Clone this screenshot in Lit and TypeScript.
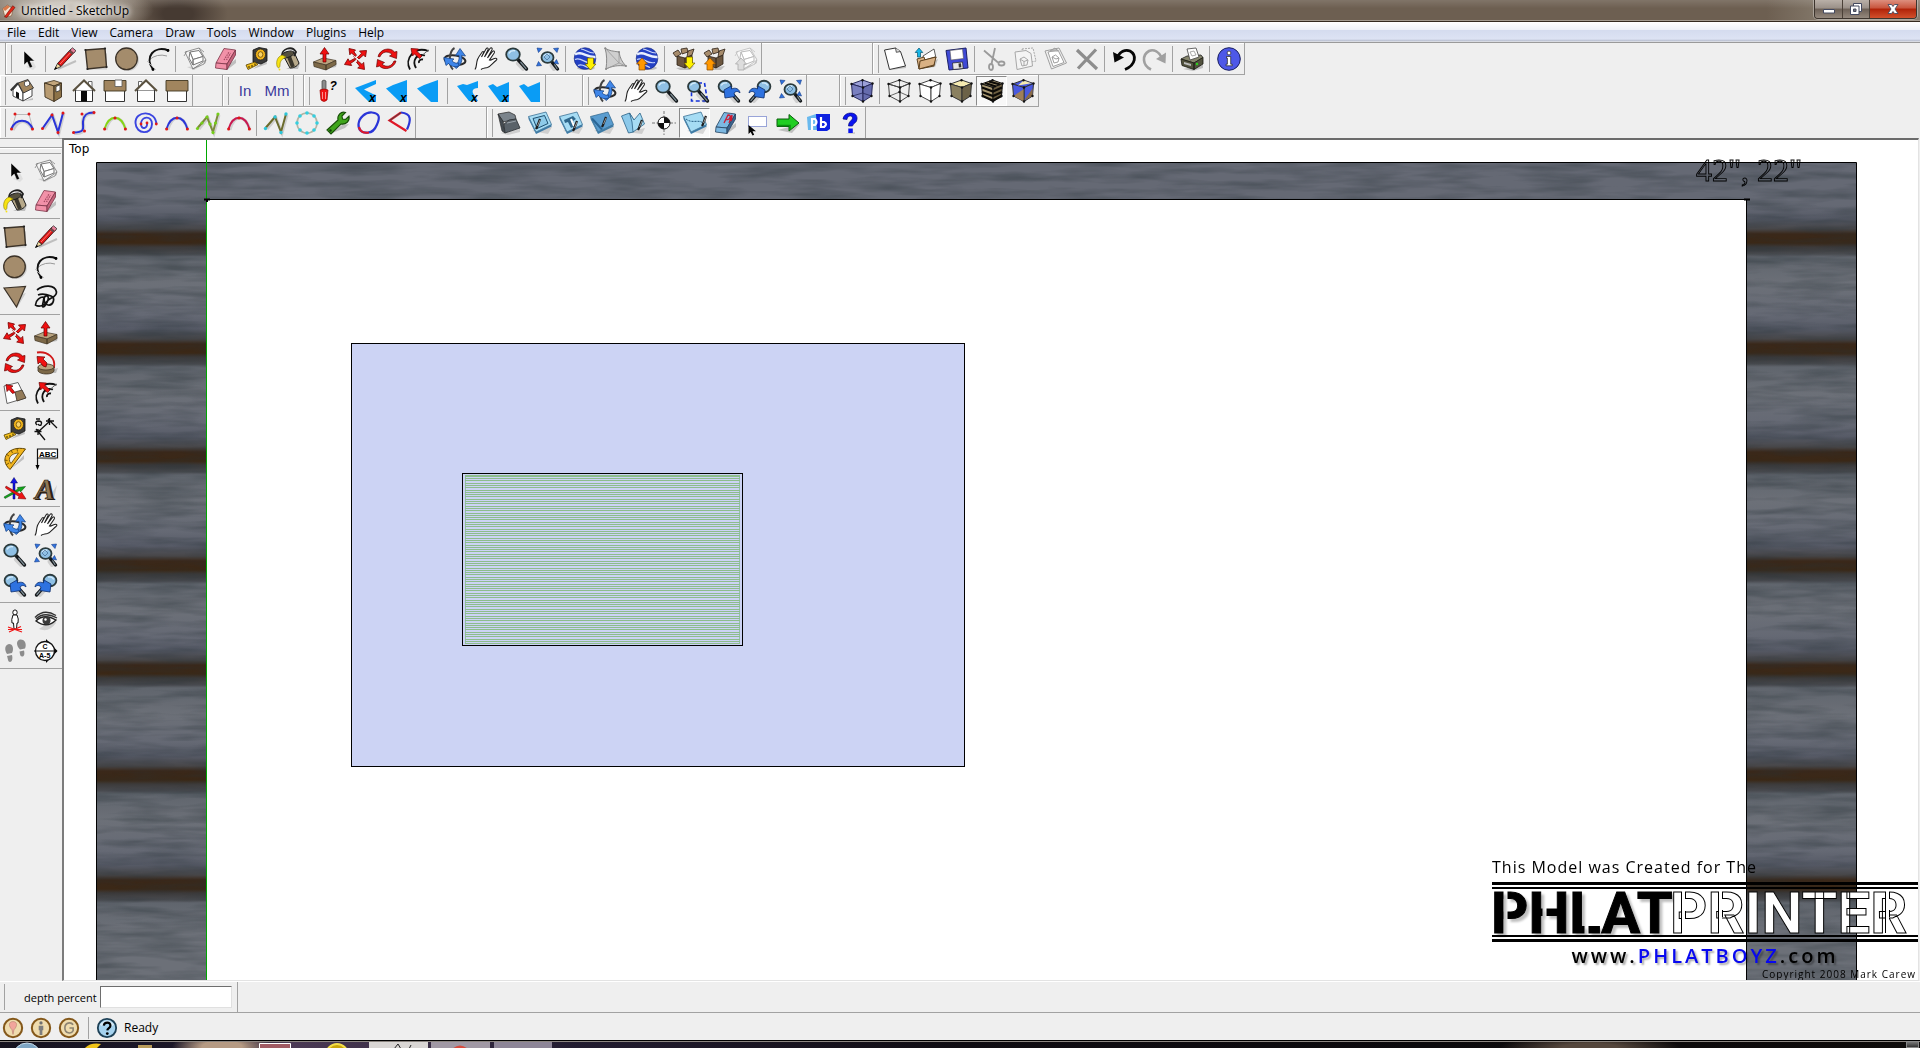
import { LitElement, html, css, svg, nothing } from "lit";
import type { SVGTemplateResult } from "lit";
import { customElement, property } from "lit/decorators.js";
import { classMap } from "lit/directives/class-map.js";
import { styleMap } from "lit/directives/style-map.js";

type Art = SVGTemplateResult;

/* ---------- shared icon parts ---------- */

const arrowDown = (x: number, y: number, fill: string): Art =>
  svg`<path d="M${x - 3} ${y}h6v6h2.500l-5.500 6-5.500-6h2.500z" fill=${fill} stroke="#6b5a00" stroke-width=".7"/>`;
const arrowUp = (x: number, y: number, fill: string): Art =>
  svg`<path d="M${x - 3} ${y + 12}h6v-6h2.500l-5.500-6-5.500 6h2.500z" fill=${fill} stroke="#8a4a00" stroke-width=".7"/>`;
const dots = (pts: number[][], fill: string, r = 1.3): Art[] =>
  pts.map(([x, y]) => svg`<circle cx=${x} cy=${y} r=${r} fill=${fill}/>`);
const lens = (cx: number, cy: number, r: number): Art => svg`
  <path d="M${cx + r - 2} ${cy + r + 2}l${20 - cx - r} ${20 - cy - r}" stroke="#0002" stroke-width="4" stroke-linecap="round"/>
  <path d="M${cx + r * 0.7} ${cy + r * 0.7}L21.500 22" stroke="#15191c" stroke-width="3.400" stroke-linecap="round"/>
  <path d="M${cx + r * 0.7 + 3} ${cy + r * 0.7 + 3}L21 21.500" stroke="#7d8c94" stroke-width="1.200" stroke-linecap="round"/>
  <ellipse cx=${cx} cy=${cy} rx=${r} ry=${r * 0.9} fill="#8fc0e4" stroke="#2b3a3c" stroke-width="1.800"/>
  <path d="M${cx - r * 0.6} ${cy - 1}q${r * 0.3} ${-r * 0.5} ${r * 0.9} ${-r * 0.4}" stroke="#d5ecfb" stroke-width="1.400" fill="none"/>`;
const cube = (top: string, left: string, right: string, line = "#222", extra: Art | typeof nothing = nothing): Art => svg`
  <path d="M1.500 5L12.500 1 22.500 4.500 13 8.500z" fill=${top} stroke=${line}/>
  <path d="M1.500 5L13 8.500V22.500L2.500 17z" fill=${left} stroke=${line}/>
  <path d="M22.500 4.500L13 8.500V22.500L21.500 17z" fill=${right} stroke=${line}/>
  ${extra}
  ${dots([[1.5, 5], [12.5, 1.2], [22.5, 4.5], [13, 8.5], [13, 22.5], [2.5, 17], [21.5, 17]], "#111", 1.2)}`;
const arc = (color: string, knob: string): Art => svg`
  <path d="M3 19C7 3 18 3 23 19" fill="none" stroke="#0002" stroke-width="3"/>
  <path d="M1.500 18C6 3 18 3 22.500 18" fill="none" stroke=${color} stroke-width="2"/>
  ${dots([[1.6, 18], [12, 7], [22.4, 18]], knob, 1.5)}`;
const globe: Art = svg`
  <ellipse cx="13" cy="21" rx="9" ry="2" fill="#0003"/>
  <circle cx="12" cy="11.500" r="10.800" fill="#2441c4" stroke="#152778" stroke-width=".6"/>
  <path d="M2 7.500C8 3 14 11 22.500 10" fill="none" stroke="#e8efff" stroke-width="2.400"/>
  <path d="M2 12.500c7-3 9 5 18 3M8 2c4 0 7 4 13 4M5 18.500c4-2 7 1 10 2" fill="none" stroke="#c9d6fb" stroke-width="1.200"/>`;
const carton: Art = svg`
  <path d="M4 21l18-2-4 4H8z" fill="#0003"/>
  <path d="M5 9l8 2 7-3v9l-7 4-8-3z" fill="#6b563f" stroke="#2c2117" stroke-width=".8"/>
  <path d="M1 6l5-3 3 4-5 3zM9 2l6-1 1 4-6 2zM16 4l6-2-2 6-5 2z" fill="#a78c6c" stroke="#2c2117" stroke-width=".8"/>
  <path d="M13 11v10" stroke="#2c2117"/>`;
const frame = (fill: string, line: string): Art => svg`
  <path d="M4 20l16-2 3-8v6l-12 7z" fill="#0002"/>
  <path d="M2 5L16 1l7 12-13 9z" fill=${fill} stroke=${line} stroke-width=".8"/>
  <path d="M7 5l9-1.500 4 6-10 3z" fill="#fff" stroke=${line}/>
  <path d="M7 5l3 7.500V18l-4-7zM10 12.500l10-3v4.500l-10 4z" fill="#fff" stroke=${line}/>
  <path d="M1 9l3-5M9 22l12-5 2-4M16 1l5 4" fill="none" stroke=${line} stroke-width=".7"/>`;
const rubber = (body: string, dark: string, line: string): Art => svg`
  <path d="M9 22l13-10v4l-9 7z" fill="#0003"/>
  <path d="M10 1.500l11.500 1.500-8.500 14L2 16z" fill=${body} stroke=${line} stroke-width=".8"/>
  <path d="M2 16l11 1v5.500L1.500 21z" fill=${body} stroke=${line} stroke-width=".8"/>
  <path d="M13 17l8.500-14v5L13 22.500z" fill=${dark} stroke=${line} stroke-width=".8"/>`;
const wedge = (d: string, x: boolean): Art => svg`
  <path d=${d} fill="#0a9cf5"/>
  ${x ? svg`<text x="15" y="23" font-family="Liberation Sans" font-size="12" font-weight="700" font-style="italic">x</text>` : nothing}`;
const slab = (fill: string, inner: Art | typeof nothing): Art => svg`
  <path d="M4 20l16 3 4-7-4-4z" fill="#0002"/>
  <path d="M.5 5.500L18 1l5.500 12.500L8 21z" fill=${fill} stroke="#2a6288" stroke-width=".7"/>
  <path d="M8 21l15.500-7.500v2L8 23zM.5 5.500L8 21v2L.5 8z" fill="#3d7ba6"/>
  ${inner}`;
const bit = (x: number, y: number): Art =>
  svg`<path d="M${x + 3} ${y - 6}l-3 8-1 2" stroke="#1c1c1c" stroke-width="2.200" fill="none"/><path d="M${x + 3} ${y - 5}l-2.500 6" stroke="#ccc" stroke-width=".7"/>`;

const ICONS: Record<string, Art> = {
  select: svg`<path d="M10 20l7-6 3 6-3 3z" fill="#0001"/><path d="M8 4v14l3.200-3 2.600 6 2.800-1.200-2.600-5.800h4.500z" fill="#050505" stroke="#fff" stroke-width=".5"/>`,
  pencil: svg`<path d="M5 22L23 14" stroke="#0003" stroke-width="2"/><path d="M4.500 16.500L18 2l3.500 3L8 19.500z" fill="#e01818" stroke="#2a0000" stroke-width=".8"/><path d="M7 17L19 4" stroke="#ff7a70"/><path d="M4.500 16.500L1.500 22.500 8 19.500z" fill="#f0d79b" stroke="#222" stroke-width=".8"/><path d="M2.800 19.800l-1.600 3 3.200-1.400z" fill="#000"/><path d="M17 3l2.500-2.200 3.500 3L20.500 6z" fill="#e9829c" stroke="#333" stroke-width=".8"/><path d="M16 4l3.800 3" stroke="#555" stroke-width="1.500"/>`,
  rect: svg`<path d="M3 22.500h20V6z" fill="#0002"/><path d="M1.500 3L21 1.500 22.500 20 3.500 22z" fill="#a48c6c" stroke="#3b3228" stroke-width="1.400"/>${dots([[1.5, 3], [21, 1.5], [22.5, 20], [3.5, 22]], "#222", 1.1)}`,
  circle: svg`<circle cx="13" cy="13" r="11" fill="#0002"/><circle cx="11.500" cy="11.800" r="10.800" fill="#a48c6c" stroke="#3b3228" stroke-width="1.300"/>`,
  arc: svg`<path d="M3 13q8-7 18-4" fill="none" stroke="#999"/><path d="M7 22.500C-2 10 8-2 22.500 3.500" fill="none" stroke="#111" stroke-width="2"/><path d="M10 23L1 14" stroke="#bbb" stroke-width=".8"/><circle cx="7" cy="22.500" r="1.400"/><circle cx="22" cy="3.500" r="1.400"/>`,
  component: frame("#f5f5f5", "#777"),
  eraser: svg`${rubber("#f291a8", "#c6647c", "#7a3346")}<path d="M10 13l5-8M12.500 13l4-7" stroke="#a24860" stroke-width="1.200" stroke-dasharray="1.500 1"/>`,
  tape: svg`<path d="M8 22l14-5-1-4z" fill="#0003"/><path d="M8 3l6-2.500 8 1.500v12l-6 3-8-2z" fill="#3b3b3b" stroke="#141414" stroke-width=".8"/><ellipse cx="15.500" cy="7.500" rx="5" ry="5.500" fill="#f3b51b" stroke="#222" stroke-width=".8"/><ellipse cx="15.500" cy="7.500" rx="2.400" ry="2.800" fill="#f8d268" stroke="#6b4a00" stroke-width=".8"/><path d="M1 18l9-3 3 2.500-10 5z" fill="#f3c01b" stroke="#5b4300" stroke-width=".8"/><path d="M4 19v2M7 18v2M10 16.500v2" stroke="#000" stroke-width=".8"/>`,
  bucket: svg`<path d="M10 22l14-6-2 6z" fill="#0003"/><path d="M7 8l11-3 5 11c-2 4-6 5-9 5z" fill="#b7a98a" stroke="#1d1d1d"/><path d="M12 7l5 13" stroke="#3b372c" stroke-width="4"/><path d="M6 9C5 2 16-2 20 5l-2 4" fill="none" stroke="#222" stroke-width="1.800"/><ellipse cx="11.500" cy="7.500" rx="6.500" ry="3" transform="rotate(-20 11.500 7.500)" fill="#55503f" stroke="#222"/><path d="M6 8C1 10 0 15 1 19c1 3 3 2 3-1 0-4 2-6 6-8z" fill="#f7e312" stroke="#8a7a00" stroke-width=".6"/><circle cx="3.500" cy="22.500" r=".9" fill="#f7e312"/>`,
  pushpull: svg`<path d="M8 23l15-3 1-4z" fill="#0003"/><path d="M.5 15L10 11l13 2.500L13 18z" fill="#b9a37f" stroke="#3f3423" stroke-width=".7"/><path d="M.5 15L13 18v5L1 19.500zM13 18l10-4.500v4L13 23z" fill="#7d6948" stroke="#3f3423" stroke-width=".7"/><path d="M10 15V7H7L11.500.5 16 7h-3v8z" fill="#f01010" stroke="#600" stroke-width=".7"/>`,
  move: svg`<path d="M5 1.500l6.500 1.500-1.500 1.800 2.500 3.500-1.200 1-3.800-3.300-1.700 1.800zM22.500 3.500l-1 6.500-2-2-4.500 4-1.500-1.500 4-4.200L15.500 4zM20.500 22.500l-6.800-1.500 2-1.800-3.200-4 1.800-1 3.700 3.200 1.700-2zM.5 17.500l3.500-5.700 1.500 2.500 5-2.800 1 1.500-5 3.500 1.200 2z" fill="#f01212" stroke="#700" stroke-width=".8"/><path d="M9.500 9.500l5 5M9 14l5-4" stroke="#b81010" stroke-width="1" stroke-dasharray="1.500 1"/>`,
  rotate: svg`<path d="M3 9.500C5 2 15-.5 19.500 5l2.500-.5-.5 7-7-2.500 2.500-1.500C13 3.500 7 4.500 5 9.800zM21 14c-2 7.500-12 10-16.500 5L1.500 20l1-7.500 7 3L7 17c4 4 10 2.500 12-3z" fill="#ee1111" stroke="#600" stroke-width=".7"/>`,
  offset: svg`<path d="M4 22.500C-2 12 8-1 22.500 4M10 21C6 14 10 6 19 8.500M13 16c-.5-2 1-4 4-3.500" fill="none" stroke="#111" stroke-width="1.800"/><path d="M22.500 3l-6 5" stroke="#666"/><path d="M5 1.500l7.500.5-1.800 2.200L16 9l-2.500 2.500L8.500 7 6.500 9z" fill="#f01212" stroke="#600" stroke-width=".7"/>`,
  orbit: svg`<ellipse cx="12" cy="13" rx="10.500" ry="4.500" fill="none" stroke="#2b2b2b" stroke-width="2" transform="rotate(8 12 13)"/><path d="M10 22.500C5 18 6 4 11.500 1" fill="none" stroke="#444" stroke-width="2"/><path d="M13 21.500C19 18 19.500 12 18.500 8.500l4 .5L17 1.500l-4.500 7 3.500-.2c.5 4-.5 8-5 11z" fill="#3f86e8" stroke="#123d80" stroke-width=".7"/><path d="M.8 10.500L11 12l-2 1.800c2 2.200 4 2.700 7 2.200l-1 3.500c-4 .8-8-.5-9.500-3L3 18.500z" fill="#3f86e8" stroke="#123d80" stroke-width=".7"/>`,
  pan: svg`<path d="M1 22.500c2-3 1-6 2.500-10C4.500 10 6 8 7.500 6c1-2 2.500-2 2 0l-2 4 4.500-8c1-1.800 2.700-1 2 .8L10.500 10l5.500-8.500c1.200-1.500 2.700-.4 2 1.200L13.500 11l5-6.500c1.200-1.400 2.600 0 1.700 1.500L15.500 13c1.500.5 3-.8 5-1.500 2.500-.8 3 1 1.500 2-3 2-5 5.500-8.500 7-2.500.8-5 .5-6.500 2" fill="#fff" stroke="#222" stroke-width="1.100"/>`,
  zoom: lens(8, 7.5, 6.8),
  extents: svg`${lens(11.5, 10.5, 6)}<path d="M8 10l3-3 3 3-3 3z" fill="none" stroke="#335b88" stroke-width=".6"/><path d="M1 1l5 .5L2.500 5.500zM22.500 1l-5 .5L21 5.500zM.5 19l5-.5L2.500 14.500zM22.500 17l-4.500-1 2.500-3.500z" fill="#2e72e0" stroke="#153c88" stroke-width=".6"/>`,
  earthDown: svg`${globe}${arrowDown(17.5, 11, "#fff200")}`,
  terrain: svg`<path d="M1 1c4 3 8 3 14 4 1 6 3 10 7 14-8-1-14 0-20 3 1-8 1-14-1-21z" fill="#cfcfcf" stroke="#888"/><path d="M1 1l14 15 7 3M15 5v11L2 22" fill="none" stroke="#999" stroke-width=".8"/>${dots([[1.2, 1.2], [15, 5], [22, 19], [2, 22]], "#888", 1)}`,
  earthUp: svg`${globe}${arrowUp(7, 11, "#ff9800")}`,
  boxDown: svg`${carton}${arrowDown(17.5, 10, "#fff200")}`,
  boxUp: svg`${carton}${arrowUp(7, 11, "#ff9800")}`,
  share: svg`${frame("#f8f8f8", "#bbb")}<path d="M4 23v-6H1.500L7 11l5.500 6H10v6z" fill="#ddd" stroke="#aaa" stroke-width=".8"/>`,
  newDoc: svg`<path d="M8 23l15-5v3z" fill="#0003"/><path d="M1.500 3L12.500 1l5 3.500L22.500 19 6.500 22.500z" fill="#fff" stroke="#333"/><path d="M12.500 1l.8 4.300 4.200-.8" fill="#ddd" stroke="#333" stroke-width=".8"/>`,
  open: svg`<path d="M3 22l18-2 3-8z" fill="#0003"/><path d="M9 9l11-7 2 9-12 4z" fill="#fff" stroke="#333" stroke-width=".8"/><path d="M3 12l7-2 1 3 10-3-1 9L5 22z" fill="#d9b184" stroke="#503514" stroke-width=".9"/><path d="M5 22l1-8 16-4-2 8z" fill="#d9b184" stroke="#503514" stroke-width=".9"/><path d="M3.500 10V5.500H1.200L5 1l3.800 4.500H6.500V10z" fill="#18b7e8" stroke="#05526b" stroke-width=".7"/>`,
  save: svg`<path d="M1 3.500L21 1l2 20-19 2z" fill="#3f49d6" stroke="#1b1f66"/><path d="M5 3.500L17.500 2l1 9.500L6 13z" fill="#fff" stroke="#555" stroke-width=".6"/><path d="M7.500 16l10-1 .7 6.500-10 1z" fill="#e8e8e8" stroke="#222" stroke-width=".7"/><path d="M13.500 16.500l2.500-.2.400 4-2.500.2z" fill="#333"/>`,
  cut: svg`<g fill="none" stroke="#9a9a9a" stroke-width="1.800"><path d="M2 3.500l14 12M13 1L9.500 17"/><ellipse cx="9" cy="20" rx="2" ry="3"/><ellipse cx="19.500" cy="16.500" rx="3" ry="2"/></g>`,
  copy: svg`<g fill="#f4f4f4" stroke="#a8a8a8"><path d="M9 2l11-1 3 13-10 2z" stroke-dasharray="2 1"/><path d="M2 5l11-1.500 5 3L19.500 19 4 22.500z"/><path d="M7 12l4-2 4 3-1 5-5 1zM7 12l4 2.500 4-1.500M11 14.500V19" fill="none"/></g>`,
  paste: svg`<g fill="#f0f0f0" stroke="#a0a0a0"><path d="M1 4l14-3 7.500 15-15 6z"/><path d="M4 5l10-2 6 12.500-11 4z" fill="#fff"/><path d="M6 4l5-3 3 3z" fill="#bbb"/><path d="M8 10l3.500-2 3.500 3-1 4-4 1zM8 10l4 2 3-1" fill="none"/></g>`,
  del: svg`<path d="M2 3l20 19M21 2.500L3 21.500" stroke="#8d8d8d" stroke-width="3.200"/>`,
  undo: svg`<path d="M13 22.500C24 18 25 8 18 4 13 2 8 5 5 10" fill="none" stroke="#060606" stroke-width="2.800"/><path d="M1 5l1.500 10.500L12 10.500z" fill="#060606"/>`,
  redo: svg`<path d="M8 22.500C-1 18-1 8 6 4c5-2 10 1 13 7" fill="none" stroke="#a0a0a0" stroke-width="2.600"/><path d="M23 5.500l-.5 11L13 12z" fill="#a0a0a0"/>`,
  print: svg`<path d="M3 22l20-4v3l-10 3z" fill="#0003"/><path d="M1 12l6-3 14-1 2 2.500L14 16z" fill="#85856c" stroke="#222" stroke-width=".8"/><path d="M7 2l9-1 3 9-9 3z" fill="#fff" stroke="#444" stroke-width=".8"/><path d="M10 5l4-1 2 4-4 1z" fill="none" stroke="#888" stroke-width=".7"/><path d="M1 12l13 4v6.500L2 18.500zM14 16l9-5.500V17l-9 5.500z" fill="#52523e" stroke="#191911" stroke-width=".8"/><path d="M4 15l7 2v2l-7-2z" fill="#bbb"/><circle cx="17" cy="17" r="1.200" fill="#2bd21c"/>`,
  info: svg`<circle cx="12" cy="12" r="11.300" fill="#4e58e8" stroke="#1a2060" stroke-width="1"/><circle cx="12" cy="6" r="1.900" fill="#fff" stroke="#222" stroke-width=".7"/><path d="M9.500 9.500h4.200v7.700h1.600v1.600H9v-1.600h1.400v-6.100h-.9z" fill="#fff" stroke="#222" stroke-width=".7"/>`,

  houseIso: svg`<path d="M14 22l9-3v2z" fill="#0003"/><path d="M3 11l5-6 5 9v8L3 17z" fill="#fff" stroke="#333" stroke-width=".9"/><path d="M13 13l9-4v8l-9 5z" fill="#fff" stroke="#333" stroke-width=".9"/><path d="M8 4l10-3.500L23.500 9 13.500 14z" fill="#a1855e" stroke="#333" stroke-width=".9"/><path d="M8 4L.8 11.500" stroke="#333" stroke-width="2"/><path d="M6 12.500l3 1.500v6l-3-1.700z" fill="#111"/><path d="M14.500 3l3-1.200 2 1V6l-3 1.500-2-1z" fill="#fff" stroke="#444" stroke-width=".8"/>`,
  houseTop: svg`<path d="M3.500 4L13 1.500 20.500 4 13 7z" fill="#c3a67c" stroke="#3c301d" stroke-width=".8"/><path d="M3.500 4L13 7v15.500L4 18z" fill="#b89b71" stroke="#3c301d" stroke-width=".9"/><path d="M13 7l7.500-3v14L13 22.500z" fill="#8d7247" stroke="#3c301d" stroke-width=".9"/><path d="M15 7.500l4-1.700v5.700L15 13z" fill="#fff" stroke="#333" stroke-width=".8"/>`,
  houseFront: svg`<path d="M3.500 11h17v11.500h-17z" fill="#fff" stroke="#333"/><path d="M16.500 2.500h3.500V9h-3.500z" fill="#fff" stroke="#444" stroke-width=".8"/><path d="M12 2L4 11h16z" fill="#fff"/><path d="M1 12L12 1.500 23 12" fill="none" stroke="#5a513f" stroke-width="2"/><path d="M9 12h6v10.500H9z" fill="#0a0a0a"/>`,
  houseRight: svg`<path d="M2.500 11h19v11.500h-19z" fill="#fff" stroke="#333"/><path d="M1 1.500h22V12H1z" fill="#a1855e" stroke="#40361f" stroke-width=".9"/><path d="M12 1h7v6.500h-7z" fill="#fff" stroke="#555" stroke-width=".8"/>`,
  houseBack: svg`<path d="M3.500 11h17v11.500h-17z" fill="#fff" stroke="#333"/><path d="M4.500 2.500H8V9H4.500z" fill="#fff" stroke="#444" stroke-width=".8"/><path d="M12 2L4 11h16z" fill="#fff"/><path d="M1 12L12 1.500 23 12" fill="none" stroke="#5a513f" stroke-width="2"/>`,
  houseLeft: svg`<path d="M2.500 11h19v11.500h-19z" fill="#fff" stroke="#333"/><path d="M1 1.500h22V12H1z" fill="#a1855e" stroke="#40361f" stroke-width=".9"/>`,

  probe: svg`<path d="M8 2q2-2 4 0v9H8z" fill="#8b8b8b" stroke="#444" stroke-width=".7"/><path d="M6 11q4-2 8 0l-1 10q-3 3-6 0z" fill="#f01414" stroke="#900" stroke-width=".7"/><path d="M8.500 13v7M11.500 13v7" stroke="#ffb0b0" stroke-width=".8"/><text x="15.500" y="11" font-family="Liberation Sans" font-size="12" font-weight="700" font-style="italic">?</text>`,
  wedgeOpenX: wedge("M1 9L22 1v4L10 10.500 19 15l3 1v7h-7z", true),
  wedgeX: wedge("M1 9.500L8 6 22 1v22h-7z", true),
  wedge: wedge("M1 9.500L8 6 22 1v22h-7z", false),
  cutOpenX: wedge("M1 7l6-2 4 1 11-4v7c-6 0-7 4-3 8l3 5h-9z", true),
  cutX: wedge("M1 7l5-2 4 3 12-5v20h-9z", true),
  cutPlain: wedge("M1 7l5-2 4 3 12-5v20h-9z", false),
  zoomWindow: svg`<path d="M5.500 4h13l3 18h-16z" fill="none" stroke="#1432d8" stroke-width="1.600" stroke-dasharray="4 2.500"/>${lens(8, 7.5, 6)}`,
  previous: svg`${lens(8, 7.5, 6.4)}<path d="M7 11l7-4 .5 3c4-2 8 0 8.500 4-2-2-4-2-6 0l1 3.500L8 19z" fill="#2e72e0" stroke="#0e2e6c" stroke-width=".8"/>`,
  next: svg`<g transform="translate(24 0) scale(-1 1)">${lens(8, 7.5, 6.4)}<path d="M7 11l7-4 .5 3c4-2 8 0 8.500 4-2-2-4-2-6 0l1 3.500L8 19z" fill="#2e72e0" stroke="#0e2e6c" stroke-width=".8"/></g>`,
  cubeXray: cube("#9ba0d8", "#7a80c0", "#666cae", "#26285a", svg`<path d="M12.500 1v13L2.500 17M12.500 14l9 3" fill="none" stroke="#26285a" stroke-width=".8"/>`),
  cubeWire: cube("none", "none", "none", "#444", svg`<path d="M12.500 1v12L2.500 17M12.500 13l9 4" fill="none" stroke="#444" stroke-width=".8"/><circle cx="12.500" cy="13" r="1.200" fill="#111"/>`),
  cubeHidden: cube("#fff", "#fff", "#fff", "#444"),
  cubeShaded: cube("#f5eab0", "#8a8060", "#6c6247", "#333"),
  cubeTexture: cube("#a89872", "#a89872", "#6b5d40", "#111", svg`<path d="M2 8.500l11 4 9-4M2 13l11 4 9-4M2.500 17l10.500 4.500 8.500-4.500M5 4l11 3.500M9 2.500l11 3" fill="none" stroke="#0d0b08" stroke-width="2.200"/>`),
  cubeMono: cube("#4a5ae0", "#4a5ae0", "#4a5ae0", "#333", svg`<path d="M7 6.500L20.500 4.300 12.500 1.500z" fill="#f5eab0"/><path d="M2.500 17L13 10v12.500z" fill="#a08058"/><path d="M13 21.500l8.500-12V17z" fill="#8a6b48"/><path d="M13 8.500V22" stroke="#333" stroke-width=".8"/>`),

  bezier: svg`<path d="M1.500 18L6 3.500h13L23 18" fill="none" stroke="#bbb"/><path d="M3 19Q12.500 2 23 19" fill="none" stroke="#0002" stroke-width="3"/><path d="M1.500 17.500C6 7 18 7 22.500 17.500" fill="none" stroke="#2a35d8" stroke-width="2"/>${dots([[1.5, 18], [22.5, 18], [5, 3], [19, 3]], "#e01818", 1.5)}`,
  polyline: svg`<path d="M3 18L12 5l6 17 5-20" fill="none" stroke="#0002" stroke-width="3"/><path d="M1.500 17.500L11 4l6 17L22 2" fill="none" stroke="#2a35d8" stroke-width="2"/>${dots([[1.5, 17.5], [11, 4], [17, 21.5], [22, 2]], "#e01818", 1.5)}`,
  scurve: svg`<path d="M2 22c14 0 8-6 9-12s4-8 12-8" fill="none" stroke="#0002" stroke-width="4"/><path d="M1.500 21.500c13 0 9-5 9.500-11S14 1.500 22 1.500" fill="none" stroke="#2a35d8" stroke-width="2"/>${dots([[1.5, 21.5], [12.5, 20], [10, 3], [22, 1.5]], "#e01818", 1.5)}`,
  arcGreen: arc("#86d515", "#e01818"),
  spiral: svg`<path d="M22.300 13C22-1 1-1 1.500 12c.5 12 16.500 12 16.500 1 0-9-11-8-11 0 0 6 7 5 6-1" fill="none" stroke="#3b45e0" stroke-width="1.900"/>${dots([[22.3, 13], [7, 13], [13, 12]], "#e01818", 1.4)}`,
  arcBlue: arc("#2a35d8", "#e01818"),
  polyGreen: svg`<path d="M3 18L12 7l6 15 5-18" fill="none" stroke="#0002" stroke-width="3"/><path d="M1.500 17L11 6l6 15 5-18" fill="none" stroke="#7c8c3a" stroke-width="2"/>${dots([[1.5, 17.5], [6, 12], [11, 6], [14, 13], [17, 21.5], [19.5, 12], [22, 3]], "#74d018", 1.6)}`,
  arcRed: arc("#c81850", "#e01818"),
  polyTeal: svg`<path d="M3 18L12 7l6 15 5-18" fill="none" stroke="#0002" stroke-width="3"/><path d="M1.500 17L11 6l6 15 5-18" fill="none" stroke="#6b6b2c" stroke-width="2"/>${dots([[1.5, 17.5], [11, 6], [17, 21.5], [22, 3]], "#2cc5d8", 1.7)}`,
  ring: svg`<circle cx="12" cy="12" r="10" fill="none" stroke="#b4b4a4" stroke-width="1.600"/>${dots([[12, 2], [19, 5], [22, 12], [19, 19], [12, 22], [5, 19], [2, 12], [5, 5]], "#34cfe0", 1.8)}`,
  wrench: svg`<path d="M4 23l12-9 7-1-4 4z" fill="#0003"/><path d="M1 19L12 9c-1-5 3-9 7.500-7.500L16 5l.5 3 3 .5L23 5c1 5-3 9-8 8L5 23z" fill="#3fa51b" stroke="#174d08" stroke-width="1.100"/><circle cx="4.500" cy="19.500" r="1.200" fill="#123c06"/>`,
  loop: svg`<path d="M15 1.500c8 1 8 5 5 12-2 5-5 8-9 8" fill="none" stroke="#2a35d8" stroke-width="2.200"/><path d="M11 21.500C5 22.500 1 19 1.500 13 2 7 8 1 15 1.500" fill="none" stroke="#2a35d8" stroke-width="2.200"/><path d="M2 16c.5 4 4 6.500 10 5.500" fill="none" stroke="#e01828" stroke-width="2.200"/>`,
  fan: svg`<path d="M13 1.500c11 1 10 8 6 17" fill="none" stroke="#2a35d8" stroke-width="2.200"/><path d="M13 1.500L1.500 9.500l17 10.500" fill="none" stroke="#e01828" stroke-width="2.200"/><path d="M13 1.500L1.500 9.500" stroke="#444" stroke-width="1"/>`,

  folder: svg`<path d="M3 22l20-4v3l-12 3z" fill="#0002"/><path d="M1 3l11-2 6 3 1 4-13 3z" fill="#7b848c" stroke="#333" stroke-width=".8"/><path d="M1 3l4 17 3 2L6 10z" fill="#454c52" stroke="#222" stroke-width=".6"/><path d="M7 13l5-4 7-1 4 9-15 5z" fill="#5a6269" stroke="#2a2e32" stroke-width=".8"/><path d="M10 12l9-2" stroke="#9aa3aa"/>`,
  slabInside: slab("#a6dcf4", svg`<path d="M5 7.500L16.500 4.500l3.500 8L9 17.500z" fill="#8ecbea" stroke="#1d4f70"/>${bit(9, 14)}`),
  slabOutside: slab("#a6dcf4", svg`<path d="M5 9l9-4 3 3-3 2 2 5-4 2-3-6-3 1z" fill="#2e678c"/><path d="M12 8l3 7" stroke="#fff" stroke-width="2"/>${bit(15, 16)}`),
  slabCenter: slab("#5a9dd0", svg`<path d="M2 7.500l10 11" stroke="#2c6796" stroke-width="2"/>${bit(13, 12)}`),
  slabFold: svg`<path d="M5 21l16 2 3-6z" fill="#0002"/><path d="M.5 5l8-3 5 8-1 11-5 1z" fill="#8cc9ea" stroke="#2a6288" stroke-width=".8"/><path d="M8.500 2L13 9l6-7 4.500 11L12 21l-1-10z" fill="#a6dcf4" stroke="#2a6288" stroke-width=".8"/>${bit(18, 15)}`,
  safe: svg`<path d="M12 0v24M0 12h24" stroke="#777" stroke-dasharray="3 1.500"/><circle cx="12" cy="12" r="6" fill="#fff" stroke="#111"/><path d="M12 12V6a6 6 0 0 1 6 6zM12 12v6a6 6 0 0 1-6-6z" fill="#111"/>`,
  slabPlunge: slab("#a6dcf4", svg`<path d="M3 8c6 5 13 0 17 4" fill="none" stroke="#2a6288" stroke-dasharray="2 1"/>${bit(20, 11)}`),
  rubberBlue: svg`${rubber("#7cb8e2", "#3c648e", "#23415e")}<path d="M10 12l4-8q4 0 1 4l-2.500 1M15 12l3-8q0 4-1 6" fill="none" stroke="#d01830" stroke-width="1.300"/>`,
  marquee: svg`<path d="M3.500 5.500h18v10h-18z" fill="#fff" stroke="#3a50b8" stroke-dasharray="1 1"/><path d="M3.500 14v9l2.200-2 1.800 3.500 1.700-.8-1.700-3.400H11z" fill="#050505"/>`,
  go: svg`<path d="M2 19l14 3 8-9z" fill="#0003"/><path d="M1 8h12V3.500l10 8.500-10 8v-4.500H1z" fill="#1fce22" stroke="#0a5f0c"/><path d="M2 14.500h12v4" fill="none" stroke="#0a8f10" stroke-width="1.500"/>`,
  board: svg`<path d="M0 6l9-3h4v16H1z" fill="#69b9ee"/><path d="M9 3h14v15l-3 2H10z" fill="#0e22e0"/><path d="M5 19V8h3q3 3 0 6H6" fill="none" stroke="#fff" stroke-width="2.200"/><path d="M14 6v10h3q4-3 0-5h-3" fill="none" stroke="#fff" stroke-width="2.200"/>`,
  question: svg`<path d="M7 23h10v-2z" fill="#0002"/><path d="M5 8C6 0 20 0 19 8c0 4-4 4-4.500 7h-4c0-5 4-5.500 4-8 0-3-5-3-5.500 1.500z" fill="#0a14f0" stroke="#060a80" stroke-width=".7"/><path d="M10.300 17.500h4.500v4.500h-4.500z" fill="#0a14f0"/>`,

  polygon: svg`<path d="M14 23l9-15-8 2z" fill="#0002"/><path d="M1 3l21.500-1.500L13.500 22z" fill="#a48c6c" stroke="#3b3228" stroke-width="1.200"/>`,
  freehand: svg`<path d="M3 5C9 0 21-1 22.500 7c0 6-7 5-10 10-2 4-8 5-11 3 0-5 5-8 7.500-8s-2 10 0 10 8-10 4-11-4 8 1 9 8-7 3-9-9-3-13-1" fill="none" stroke="#111" stroke-width="1.700"/>`,
  follow: svg`<path d="M3 1.500C14 0 22 7 20 17" fill="none" stroke="#d01818" stroke-width="1.800"/><path d="M6 22h16l2-5z" fill="#0003"/><path d="M4 16v4c2 4 15 4 16 0v-4z" fill="#7d6948" stroke="#3f3423" stroke-width=".8"/><ellipse cx="12" cy="16" rx="8" ry="3" fill="#b9a37f" stroke="#3f3423" stroke-width=".8"/><path d="M3 5.500l8 .5-2 2 4 4-1 4-3-1-3-4-2 2z" fill="#f01212" stroke="#600" stroke-width=".7"/>`,
  scale: svg`<path d="M1 5L15 1.500 22.500 17 4 22.500z" fill="#fff" stroke="#555" stroke-width=".9"/><path d="M12 11l7-2 4 8-9 3z" fill="#927a58" stroke="#3b3228" stroke-width=".8"/><path d="M3 3.500l7 1.500-2 1.500 4 5-2.500 1-3.500-4-2 2z" fill="#f01212" stroke="#600" stroke-width=".7"/>`,
  dimension: svg`<path d="M4 15L16 4M.5 14.500h7M4 12v6M2 12l9 11M12 4h8M15.500 1v7M14 2l9 9" stroke="#111" stroke-width="1.300" fill="none"/><path d="M2 2h4M3 8q-3-3 1-4 5 0 3 4-2 1-3-1" fill="none" stroke="#111" stroke-width="1.400"/>`,
  protractor: svg`<path d="M8 22l13-14v4z" fill="#0003"/><path d="M7 22.500C-5 12 6-2 22.500 2z" fill="#f2b51e" stroke="#614500"/><path d="M8 16.500C3.500 11 9 6 15.500 6z" fill="#efefef" stroke="#614500" stroke-width=".8"/><path d="M3 18l3-2M1.500 13l3 .5M3 7l3 2M8 3l1.500 3M14 1.500l.5 3" stroke="#614500" stroke-width=".8"/>`,
  label: svg`<path d="M6 12l16 1v-2z" fill="#0003"/><path d="M3.500 2h20v9h-20z" fill="#fff" stroke="#111" stroke-width="1.200"/><path d="M3.500 11v10" stroke="#111" stroke-width="1.200"/><path d="M1.500 18h4l-2 5z"/><text x="5" y="9.500" font-family="Liberation Sans" font-size="8" font-weight="700">ABC</text>`,
  axes: svg`<path d="M10 22V6H7.500L11 .5 14.500 6H12v16z" fill="#1414e8" stroke="#000050" stroke-width=".5"/><path d="M1 20l14-8-.5-1.500 8-1-5 5.500-.8-1.500L2 21.500z" fill="#12a81c" stroke="#04400a" stroke-width=".5"/><path d="M3 9l14 8 1.500-2 4.500 7-8-.5 1-2L2.500 11z" fill="#ee1414" stroke="#600" stroke-width=".5"/>`,
  solidText: svg`<path d="M14 22l9-14-3 14z" fill="#0002"/><text x="2.500" y="22.500" font-family="Liberation Serif" font-size="30" font-weight="700" font-style="italic" fill="#2a2018">A</text><text x="1" y="22" font-family="Liberation Serif" font-size="29" font-weight="700" font-style="italic" fill="#8f7856" stroke="#1c140c" stroke-width=".7">A</text>`,
  person: svg`<ellipse cx="12" cy="3.500" rx="2.200" ry="2.600" fill="#fff" stroke="#111"/><path d="M10 6q-2 5-1 8h1.500l.5 6h2.500l.5-6H15q1-4-1-8z" fill="#fff" stroke="#111"/><path d="M5 18l14 5M18 17.500L6 23M5 20.500h14" stroke="#f01414" stroke-width="1.200"/>`,
  eye: svg`<path d="M5 20q10 4 17-6l-2-4z" fill="#0002"/><path d="M2 12q8-8 20-1-9 9-20 1z" fill="#fff" stroke="#222" stroke-width="1.400"/><circle cx="12.500" cy="11.500" r="4" fill="#3b3b3b"/><circle cx="11.500" cy="10.500" r="1.200" fill="#fff"/><path d="M1 8.500Q10-1 22 6.500M2 10Q10 2 23 9" fill="none" stroke="#333" stroke-width="1.400"/>`,
  feet: svg`<g fill="#8c8c8c"><path d="M6 5c4 0 5 5 3 9l-5 1C1 10 2 6 6 5zM4 17l5-1c1 4 0 7-2 7s-2-3-3-6zM17 .5c5-.5 7 5 5 9l-5 1c-4-4-4-9 0-10zM16.500 12.500l4.500-1c1 4 0 6-2 6s-2-3-2.500-5z"/></g>`,
  section: svg`<path d="M12 0l11.500 12L12 24z"/><circle cx="11" cy="12" r="9.500" fill="#fff" stroke="#111" stroke-width="1.300"/><path d="M0 12h23" stroke="#111"/><text x="8.500" y="10" font-family="Liberation Sans" font-size="7" font-weight="700">C</text><text x="5" y="19" font-family="Liberation Sans" font-size="7" font-weight="700">A-5</text>`,

  location: svg`<circle cx="12" cy="12" r="10" fill="#efdcae" stroke="#84581a" stroke-width="2.200"/><path d="M12 5c5 0 5 5 1 9l-1 5-1-5c-4-4-4-9 1-9z" fill="#f2a59c" stroke="#b98372" stroke-width=".7"/>`,
  author: svg`<circle cx="12" cy="12" r="10" fill="#efdcae" stroke="#84581a" stroke-width="2.200"/><circle cx="12" cy="6.500" r="1.800" fill="#6f6f6f"/><path d="M9.500 9.500h5v5h-1v5h-3v-5h-1z" fill="#7d7d7d"/>`,
  signin: svg`<circle cx="12" cy="12" r="10" fill="#efdcae" stroke="#84581a" stroke-width="2.200"/><path d="M16.500 8.500C14 5 7.500 6 7.500 12s7 7 9 3v-3h-4" fill="none" stroke="#8d8472" stroke-width="1.800"/>`,
  help: svg`<circle cx="12" cy="12" r="10" fill="#a5d2ee" stroke="#1d4056" stroke-width="2"/><path d="M5 9q7-7 14 0" fill="none" stroke="#fff8" stroke-width="3"/><path d="M8.500 9.500C9 5 16 5 15.700 9.500c0 2.500-3.200 2.500-3.400 5" fill="none" stroke="#000" stroke-width="2.400"/><circle cx="12.300" cy="18" r="1.500"/>`,
  app: svg`<path d="M3 8l8-6 10 6-3 12-11 3z" fill="#f3e6d4" stroke="#7b4a28"/><path d="M3 8l8-6 4 3-8 7z" fill="#d8794a"/><path d="M6 22L20 3l4 3L10 23z" fill="#e02818" stroke="#6a0c06"/>`,
};

interface Tool {
  icon?: string;
  text?: string;
  label: string;
  pressed?: boolean;
}
/* "|" is the ordinary divider, "||" the roomier one. */
type Item = Tool | "|" | "||";
const t = (icon: string, label: string, pressed = false): Tool => ({ icon, label, pressed });

interface Band {
  /* Width the user has dragged the band to; the last band of a row hugs its tools. */
  width?: number;
  flush?: boolean;
  items: Item[];
}

const ROWS: { indent: boolean; bands: Band[] }[] = [
  {
    indent: true,
    bands: [
      {
        width: 867,
        items: [
          t("select", "Select"), "|",
          t("pencil", "Line"), t("rect", "Rectangle"), t("circle", "Circle"), t("arc", "Arc"), "|",
          t("component", "Make Component"), t("eraser", "Eraser"), t("tape", "Tape Measure"), t("bucket", "Paint Bucket"), "|",
          t("pushpull", "Push/Pull"), t("move", "Move"), t("rotate", "Rotate"), t("offset", "Offset"), "|",
          t("orbit", "Orbit"), t("pan", "Pan"), t("zoom", "Zoom"), t("extents", "Zoom Extents"), "|",
          t("earthDown", "Get Current View"), t("terrain", "Toggle Terrain"), t("earthUp", "Place Model"), "|",
          t("boxDown", "Get Models"), t("boxUp", "Share Model"), t("share", "Share Component"),
        ],
      },
      {
        items: [
          t("newDoc", "New"), t("open", "Open"), t("save", "Save"), "|",
          t("cut", "Cut"), t("copy", "Copy"), t("paste", "Paste"), t("del", "Erase"), "|",
          t("undo", "Undo"), t("redo", "Redo"), "|",
          t("print", "Print"), "|",
          t("info", "Model Info"),
        ],
      },
    ],
  },
  {
    indent: false,
    bands: [
      {
        width: 222, flush: true,
        items: [t("houseIso", "Iso"), t("houseTop", "Top"), t("houseFront", "Front"), t("houseRight", "Right"), t("houseBack", "Back"), t("houseLeft", "Left")],
      },
      { width: 81, items: [{ text: "In", label: "Inches" }, { text: "Mm", label: "Millimetres" }] },
      {
        width: 279,
        items: [
          t("probe", "Inspect"), "||",
          t("wedgeOpenX", "Open wedge, remove"), t("wedgeX", "Wedge, remove"), t("wedge", "Wedge"), "||",
          t("cutOpenX", "Open cut, remove"), t("cutX", "Cut, remove"), t("cutPlain", "Cut face"),
        ],
      },
      {
        width: 257,
        items: [t("orbit", "Orbit"), t("pan", "Pan"), t("zoom", "Zoom"), t("zoomWindow", "Zoom Window"), t("previous", "Previous"), t("next", "Next"), t("extents", "Zoom Extents")],
      },
      {
        items: [
          t("cubeXray", "X-Ray"), "|",
          t("cubeWire", "Wireframe"), t("cubeHidden", "Hidden Line"), t("cubeShaded", "Shaded"), t("cubeTexture", "Shaded With Textures", true), t("cubeMono", "Monochrome"),
        ],
      },
    ],
  },
  {
    indent: false,
    bands: [
      {
        width: 486, flush: true,
        items: [
          t("bezier", "Bezier curve"), t("polyline", "Polyline"), t("scurve", "Spline"), t("arcGreen", "Catmull spline"), t("spiral", "Spiral"), t("arcBlue", "B-spline"), t("polyGreen", "Divide polyline"), t("arcRed", "Courbette"), "|",
          t("polyTeal", "Convert polyline"), t("ring", "Mark vertices"), t("wrench", "Edit curve"), t("loop", "Close curve"), t("fan", "Close with line"),
        ],
      },
      {
        items: [
          t("folder", "Parameters"), t("slabInside", "Inside cut"), t("slabOutside", "Outside cut"), t("slabCenter", "Centerline"), t("slabFold", "Fold"), t("safe", "Safe area"),
          t("slabPlunge", "Pocket", true), t("rubberBlue", "Erase phlat edges"), t("marquee", "Select phlat edges"), t("go", "Generate code"), t("board", "Phlatboyz"), t("question", "Help"),
        ],
      },
    ],
  },
];

const PALETTE: Tool[][] = [
  [t("select", "Select"), t("component", "Make Component"), t("bucket", "Paint Bucket"), t("eraser", "Eraser")],
  [t("rect", "Rectangle"), t("pencil", "Line"), t("circle", "Circle"), t("arc", "Arc"), t("polygon", "Polygon"), t("freehand", "Freehand")],
  [t("move", "Move"), t("pushpull", "Push/Pull"), t("rotate", "Rotate"), t("follow", "Follow Me"), t("scale", "Scale"), t("offset", "Offset")],
  [t("tape", "Tape Measure"), t("dimension", "Dimension"), t("protractor", "Protractor"), t("label", "Text"), t("axes", "Axes"), t("solidText", "3D Text")],
  [t("orbit", "Orbit"), t("pan", "Pan"), t("zoom", "Zoom"), t("extents", "Zoom Extents"), t("previous", "Previous"), t("next", "Next")],
  [t("person", "Position Camera"), t("eye", "Look Around"), t("feet", "Walk"), t("section", "Section Plane")],
];

const MENUS = ["File", "Edit", "View", "Camera", "Draw", "Tools", "Window", "Plugins", "Help"];

@customElement("tool-icon")
export class ToolIcon extends LitElement {
  @property() name = "";
  static styles = css`
    :host { display: block; width: 24px; height: 24px; }
    .art { display: block; width: 100%; height: 100%; overflow: visible; }
  `;
  render() {
    return html`<svg class="art" viewBox="0 0 24 24" fill="none" aria-hidden="true"><g fill="#000">${ICONS[this.name]}</g></svg>`;
  }
}

@customElement("tool-button")
export class ToolButton extends LitElement {
  @property({ attribute: false }) tool!: Tool;
  static styles = css`
    :host { display: block; }
    .btn {
      display: flex; align-items: center; justify-content: center;
      width: 31px; height: 30px; box-sizing: border-box; padding: 0;
      border: 1px solid transparent; background: none; color: #3a3a9c;
      font: 15px "Liberation Sans", sans-serif;
    }
    .word { width: 32px; }
    .pressed { border-color: #8a8a8a #fff #fff #8a8a8a; background: #f8f8f8; }
  `;
  render() {
    const { icon, text, label, pressed } = this.tool;
    return html`<button
      class=${classMap({ btn: true, word: !!text, pressed: !!pressed })}
      aria-label=${label} aria-pressed=${pressed ? "true" : "false"}
    >${text ?? html`<tool-icon .name=${icon ?? ""}></tool-icon>`}</button>`;
  }
}

@customElement("tool-rows")
export class ToolRows extends LitElement {
  static styles = css`
    :host { display: block; background: #efefef; }
    .row { display: flex; height: 32px; box-sizing: border-box; }
    .row:last-child { height: 31px; }
    .indent { padding-left: 5px; }
    .band {
      display: flex; box-sizing: border-box; flex: none;
      border-left: 1px solid #a2a2a2; border-bottom: 1px solid #a2a2a2;
      box-shadow: inset 1px 0 #fff, inset 0 1px #fff;
    }
    .row:last-child .band { border-bottom: 0; }
    .flush { border-left: 0; }
    .grip { width: 5px; margin: 2px 0 1px 1px; box-sizing: border-box; border-right: 1px solid #a2a2a2; }
    .tools { display: flex; align-items: center; border-right: 1px solid #a2a2a2; }
    .rule { width: 1px; height: 26px; margin: 0 3px 0 2px; background: #a2a2a2; }
    .wide { margin: 0 4px; }
  `;
  render() {
    return ROWS.map((row) => html`
      <div class=${classMap({ row: true, indent: row.indent })} role="toolbar">
        ${row.bands.map((band) => html`
          <div class=${classMap({ band: true, flush: !!band.flush })} style=${styleMap(band.width ? { width: `${band.width}px` } : {})}>
            <div class="grip"></div>
            <div class="tools">
              ${band.items.map((item) => typeof item === "string"
                ? html`<span class=${classMap({ rule: true, wide: item === "||" })}></span>`
                : html`<tool-button .tool=${item}></tool-button>`)}
            </div>
          </div>`)}
      </div>`);
  }
}

@customElement("tool-palette")
export class ToolPalette extends LitElement {
  static styles = css`
    :host { display: block; width: 62px; flex: none; background: #efefef; border-top: 1px solid #a2a2a2; box-sizing: border-box; }
    .head { height: 8px; border-bottom: 1px solid #a2a2a2; box-shadow: 0 1px #fff; }
    .grip { height: 5px; border-bottom: 1px solid #a2a2a2; margin: 0 1px 1px 0; }
    .group { display: grid; grid-template-columns: 31px 31px; padding: 1px 0 2px; margin: 0 2px 2px -1px; border-bottom: 1px solid #a2a2a2; }
    .group:last-child { margin-right: 0; }
  `;
  render() {
    return html`<div class="head"></div><div class="grip"></div>
      ${PALETTE.map((group) => html`<div class="group">${group.map((tool) => html`<tool-button .tool=${tool}></tool-button>`)}</div>`)}`;
  }
}

/* Bed of the machine: dark plank joints measured from the top of the view. */
const JOINTS = [99, 209, 317, 426, 530, 636, 745];
const PLANK_STOPS: [number, string][] = [
  [-34, "#656974"], [-20, "#565a66"], [-10, "#474648"], [-5, "#3a281a"], [4, "#3b2816"], [8, "#3c3a3a"], [15, "#494b50"], [18, "#60656d"], [45, "#6c7078"],
];
const VIEW_DEPTH = 900;

/* Tool passes over the pocket, as runs of lines two pixels apart. */
const RUNS = [3, 3, 4, 3, 3, 4, 3, 4, 3, 4, 3, 3, 4, 3, 4, 3, 4, 3, 3, 4, 3, 3];
const PASSES: number[] = [];
RUNS.reduce((y, n) => {
  for (let i = 0; i < n; i++) PASSES.push(y + i * 2);
  return y + n * 2 + 1;
}, 336);

/* Stencil bridges of the outlined letters: right edge of each upright, and the bar heights it cuts. */
const BRIDGES: { x: number; bars: [number, number][] }[] = [
  { x: 190, bars: [[3, 9], [22, 29]] },
  { x: 227, bars: [[3, 9], [21, 28]] },
  { x: 394, bars: [[3, 9], [21, 28]] },
];

@customElement("model-view")
export class ModelView extends LitElement {
  static styles = css`
    :host { display: block; flex: 1; position: relative; overflow: hidden; background: #fff; }
    .scene { position: absolute; inset: 0; width: 100%; height: 100%; display: block; }
    .camera { position: absolute; left: 5px; top: 0; font: 12px/18px "DejaVu Sans", sans-serif; color: #000; }
    .coords { font: 32px "Liberation Serif", serif; }
    .mark { position: absolute; right: 0; bottom: 0; width: 426px; color: #000; font-family: "Open Sans", sans-serif; }
    .tag { font-size: 16px; line-height: 22px; letter-spacing: 1px; }
    .bars { box-sizing: border-box; height: 60px; border-top: 3px solid #000; border-bottom: 3px solid #000; margin-top: 4px; padding: 2px 0; }
    .name { display: block; box-sizing: border-box; width: 426px; height: 50px; border-top: 2px solid #000; border-bottom: 2px solid #000; overflow: visible; }
    .letters { font: 700 58px Roboto, sans-serif; }
    .solid { font-weight: 900; }
    .site { font-size: 20px; line-height: 26px; text-align: center; letter-spacing: 3px; margin-top: 1px; font-weight: 600; text-shadow: 2px 2px 2px #0005; }
    .boyz { color: #0808f0; }
    .site a { color: inherit; text-decoration: none; }
    .rights { font-size: 10px; line-height: 11px; text-align: right; padding-right: 2px; letter-spacing: 1px; }
  `;
  render() {
    return html`
      <svg class="scene" role="img" aria-label="Model seen from the top">
        <defs>
          <linearGradient id="plank" gradientUnits="userSpaceOnUse" x1="0" y1="0" x2="0" y2=${VIEW_DEPTH}>
            ${JOINTS.flatMap((j) => PLANK_STOPS.map(([d, c]) => svg`<stop offset=${(j + d) / VIEW_DEPTH} stop-color=${c}/>`))}
          </linearGradient>
          <filter id="grain" x="0" y="0" width="100%" height="100%" color-interpolation-filters="sRGB">
            <feTurbulence type="fractalNoise" baseFrequency="0.015 0.12" numOctaves="3" seed="4"/>
            <feColorMatrix values="0 0 0 0 .16  0 0 0 0 .2  0 0 0 0 .22  2 0 0 0 -.75"/>
          </filter>
        </defs>
        <path d="M32.500 22.500H1792.500V1200H1682.500V59.500H142.500V1200H32.500z" fill="url(#plank)"/>
        <g opacity=".4">
          <rect x="33" y="23" width="1759" height="36" filter="url(#grain)"/>
          <rect x="33" y="59" width="109" height="841" filter="url(#grain)"/>
          <rect x="1683" y="59" width="109" height="841" filter="url(#grain)"/>
        </g>
        <path d="M32.500 22.500H1792.500V1200H1682.500V59.500H142.500V1200H32.500z" fill="none" stroke="#000"/>
        <rect x="287.500" y="203.500" width="613" height="423" fill="#ccd3f4" stroke="#000"/>
        <rect x="398.500" y="333.500" width="280" height="172" fill="none" stroke="#000"/>
        <path d="M401.500 335V504M675.500 335V504" stroke="#93c0a8"/>
        <path d=${PASSES.map((y) => `M401 ${y}.5H676`).join("") + "M401 335.500H676"} stroke="#8dbd8c"/>
        <path d="M142.500 0V1200" stroke="#00a800"/>
        <path d="M140 59.500h6M142 61h2M1680 59.500h6" stroke="#000" stroke-width="2"/>
        <text class="coords" x="1632" y="41" fill="none" stroke="#000" stroke-width=".9">42", 22"</text>
      </svg>
      <div class="camera">Top</div>
      <div class="mark">
        <div class="tag">This Model was Created for The</div>
        <div class="bars">
          <svg class="name" role="img" aria-label="PHLATPRINTER">
            <defs>
              <filter id="drop" x="-10%" y="-10%" width="120%" height="130%"><feDropShadow dx="3" dy="3" stdDeviation="1" flood-opacity=".25"/></filter>
              <mask id="stencil">
                <rect x="-4" y="0" width="430" height="60" fill="#fff"/>
                <path d="M13.500 0V60M52.500 0V60M94.500 0V60" stroke="#000" stroke-width="4"/>
              </mask>
            </defs>
            <g filter="url(#drop)"><text class="letters" x="-1" y="44" stroke="#000" mask="url(#stencil)">PHLAT</text></g>
            <text class="letters" x="178" y="44" fill="#fff" stroke="#000">PRINTER</text>
            ${BRIDGES.map(({ x, bars }) => svg`
              <path d="M${x + 1.5} 2V45" stroke="#fff" stroke-width="3"/>
              <path d=${`M${x - 0.5} 3V44` + bars.map(([a, b]) => `M${x + 3.5} ${a}V${b}`).join("")} stroke="#000"/>`)}
          </svg>
        </div>
        <div class="site"><a href="#phlatboyz">www.<span class="boyz">PHLATBOYZ</span>.com</a></div>
        <div class="rights">Copyright 2008 Mark Carew</div>
      </div>`;
  }
}

@customElement("app-root")
export class AppRoot extends LitElement {
  static styles = css`
    :host {
      display: flex; flex-direction: column; height: 100vh; overflow: hidden;
      background: #efefef; color: #000; font: 12px "Open Sans", "Segoe UI", sans-serif;
    }
    .title {
      display: flex; align-items: center; height: 22px; box-sizing: border-box; flex: none; padding-left: 1px;
      border-bottom: 1px solid #33291f;
      background:
        linear-gradient(180deg, #fff2, transparent 40%),
        radial-gradient(ellipse 90px 26px at 64px 10px, #c9c2b9 30%, #b5aba000 100%),
        radial-gradient(ellipse 50px 28px at 178px 14px, #463a32 30%, #463a3200 100%),
        linear-gradient(90deg, #6d5f51 0 92%, #8c8274 96%, #8a7f72);
      box-shadow: inset 0 -1px #a39a8f;
    }
    .app { width: 14px; height: 14px; }
    .caption { flex: 1; padding-left: 6px; line-height: 20px; font-size: 12px; text-shadow: 0 0 6px #fff, 0 0 6px #fff; }
    .frame { display: flex; align-self: flex-start; height: 18px; margin-right: 3px; border: 1px solid #3c342d; border-top: 0; border-radius: 0 0 4px 4px; overflow: hidden; box-shadow: 0 0 0 1px #fff5; }
    .win { width: 27px; padding: 0; border: 0; border-right: 1px solid #4b4138; display: grid; place-items: center; background: linear-gradient(#b9b0a8, #9a9088 45%, #6c6056 50%, #94887d); }
    .win:nth-child(1) { width: 28px; }
    .close { width: 46px; border-right: 0; background: linear-gradient(#dd8f7e, #c8543c 45%, #b02208 50%, #d2502c); }
    .glyph { display: block; width: 14px; height: 12px; }
    .menu {
      display: flex; height: 21px; box-sizing: border-box; flex: none; border-bottom: 1px solid #9a9a9a; padding-left: 1px;
      background: linear-gradient(#fff, #eef1f8 38%, #d5dcef 42%, #dde3f4 85%, #b6bccc 95%, #fafafa);
    }
    .entry { border: 0; background: none; padding: 0 6px; font: 12px/19px "Open Sans", "Segoe UI", sans-serif; color: #000; }
    .work { display: flex; flex: 1; min-height: 0; }
    .port { display: flex; flex: 1; min-width: 0; border: 2px solid; border-color: #6b6b6b #e3e3e3 #e3e3e3 #7c7c7c; border-right-width: 1px; border-bottom-width: 1px; margin-right: 1px; }
    .vcb { display: flex; align-items: stretch; height: 32px; box-sizing: border-box; flex: none; border-bottom: 1px solid #a2a2a2; border-top: 1px solid #fff; }
    .vgrip { width: 5px; box-sizing: border-box; border-right: 1px solid #a2a2a2; margin: 2px 0; }
    .field { display: flex; align-items: center; gap: 3px; padding: 0 5px 0 19px; border-right: 1px solid #a2a2a2; font-size: 11px; }
    .value { width: 132px; height: 22px; box-sizing: border-box; border: 1px solid; border-color: #6e6e6e #e0e0e0 #e0e0e0 #6e6e6e; background: #fff; padding: 0 4px; font: inherit; }
    .status { display: flex; align-items: center; height: 27px; flex: none; padding: 2px 0 0 2px; box-sizing: border-box; }
    .lamp { width: 22px; height: 22px; padding: 0; border: 0; background: none; margin-right: 6px; }
    .lamp tool-icon { width: 22px; height: 22px; }
    .split { width: 1px; height: 22px; background: #a2a2a2; margin: 0 7px 0 2px; }
    .taskbar {
      display: flex; height: 8px; flex: none; box-sizing: border-box; overflow: hidden; border-top: 1px solid #000; justify-content: space-between;
      background:
        radial-gradient(ellipse 50px 16px at 222px 6px, #b59a83 40%, #b59a8300),
        radial-gradient(ellipse 90px 12px at 1590px 6px, #54463c 30%, #54463c00),
        linear-gradient(90deg, #16131f, #1d182a 12%, #4b3a55 15%, #221c30 30%, #0f0c12 50%, #0b090c 74%, #0e0b0a);
      box-shadow: inset 0 1px #8b8580;
    }
    .dock { width: 560px; height: 8px; display: block; }
    .peek { width: 13px; border: 1px solid #888; padding: 0; background: linear-gradient(#777, #333); margin-right: 1px; }
  `;

  render() {
    return html`
      <header class="title">
        <tool-icon class="app" name="app"></tool-icon>
        <span class="caption">Untitled - SketchUp</span>
        <div class="frame">
          <button class="win" aria-label="Minimize"><svg class="glyph" viewBox="0 0 14 12"><path d="M1.500 6.500h11v3.500h-11z" fill="#fff" stroke="#444a60"/></svg></button>
          <button class="win" aria-label="Restore"><svg class="glyph" viewBox="0 0 14 12"><path d="M4.500.5h8v8h-8z" fill="#fff" stroke="#444a60"/><path d="M1.500 3h8.500v8.500H1.500z" fill="#fff" stroke="#444a60"/><path d="M4.500 6h2.500v2.500H4.500z" fill="#777" stroke="#444a60"/></svg></button>
          <button class="win close" aria-label="Close"><svg class="glyph" viewBox="0 0 14 12"><path d="M2 1.500h3.500L7 3.500l1.500-2H12L9 6l3 4.500H8.500L7 8.500l-1.500 2H2L5 6z" fill="#fff" stroke="#444a60" stroke-width=".9"/></svg></button>
        </div>
      </header>
      <nav class="menu">${MENUS.map((m) => html`<button class="entry">${m}</button>`)}</nav>
      <tool-rows></tool-rows>
      <main class="work">
        <tool-palette></tool-palette>
        <div class="port"><model-view></model-view></div>
      </main>
      <div class="vcb">
        <div class="vgrip"></div>
        <div class="field">
          <label for="depth">depth percent</label>
          <input class="value" id="depth" type="text" />
        </div>
      </div>
      <footer class="status">
        <button class="lamp" aria-label="Geo-location"><tool-icon name="location"></tool-icon></button>
        <button class="lamp" aria-label="Credits"><tool-icon name="author"></tool-icon></button>
        <button class="lamp" aria-label="Sign in"><tool-icon name="signin"></tool-icon></button>
        <span class="split"></span>
        <button class="lamp" aria-label="Help"><tool-icon name="help"></tool-icon></button>
        <span>Ready</span>
      </footer>
      <div class="taskbar">
        <svg class="dock" viewBox="0 0 560 8" aria-hidden="true">
          <circle cx="27" cy="16" r="14" fill="#7fa6c4" stroke="#c7dcea"/>
          <path d="M84 8q6-7 17-5l-5 5z" fill="#f0c419"/>
          <path d="M138 4h14v4h-14z" fill="#b99c5a"/>
          <path d="M259.500 2.500h31v8h-31z" fill="#a05a62" stroke="#fff"/>
          <circle cx="337" cy="14" r="11" fill="#caa60a" stroke="#f4df4a" stroke-width="2"/>
          <path d="M369 1h59v8h-59z" fill="#d9d6d4"/>
          <path d="M431 1h59v8h-59z" fill="#a098a4"/>
          <path d="M494 1h58v8h-58z" fill="#8d8597"/>
          <path d="M394 8l4-5 3 5M409 8l2-4" stroke="#222" fill="none"/>
          <path d="M452 8q8-7 16 0z" fill="#d84a3c"/>
        </svg>
        <button class="peek" aria-label="Show desktop"></button>
      </div>`;
  }
}
